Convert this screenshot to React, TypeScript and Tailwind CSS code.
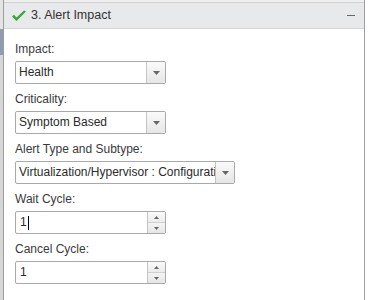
import { ReactNode } from "react";

const font = { fontFamily: '"Liberation Sans", Arial, sans-serif' };

const Label = ({ children }: { children: ReactNode }) => (
  <div className="h-[16px] text-[12px] leading-[16px] text-[#3a3a3a] mb-[4px]">{children}</div>
);

const Select = ({ value, width }: { value: string; width: string }) => (
  <div className={`flex h-[23px] ${width} border border-[#a9a9a9] rounded-[2px] bg-white overflow-hidden`}>
    <div className="flex-1 px-[3px] text-[12px] leading-[21px] text-[#2a2a2a] whitespace-nowrap overflow-hidden">{value}</div>
    <div className="w-[19px] border-l border-[#c4c4c4] bg-gradient-to-b from-[#fafafa] to-[#e6e6e6] flex items-center justify-center">
      <svg width="7" height="4" viewBox="0 0 7 4"><path d="M0 0h7L3.5 4z" fill="#666" /></svg>
    </div>
  </div>
);

const Spinner = ({ value, caret }: { value: string; caret?: boolean }) => (
  <div className="flex h-[23px] w-[151px] border border-[#a9a9a9] rounded-[2px] bg-white overflow-hidden">
    <div className="flex-1 px-[4px] text-[12px] leading-[21px] text-[#2a2a2a] flex items-center">
      {value}
      {caret && <span className="inline-block w-px h-[14px] bg-black ml-px" />}
    </div>
    <div className="w-[18px] border-l border-[#c4c4c4] flex flex-col">
      <div className="flex-1 flex items-center justify-center bg-gradient-to-b from-[#fafafa] to-[#ececec] border-b border-[#d0d0d0]">
        <svg width="5" height="3" viewBox="0 0 5 3"><path d="M0 3h5L2.5 0z" fill="#666" /></svg>
      </div>
      <div className="flex-1 flex items-center justify-center bg-gradient-to-b from-[#f4f4f4] to-[#e6e6e6]">
        <svg width="5" height="3" viewBox="0 0 5 3"><path d="M0 0h5L2.5 3z" fill="#666" /></svg>
      </div>
    </div>
  </div>
);

export default function App() {
  return (
    <div className="w-[371px] h-[300px] bg-white flex overflow-hidden" style={font}>
      {/* page behind the dialog */}
      <div className="w-[3px] flex flex-col bg-[#d8d8d8]">
        <div className="h-[29px] bg-[#e4e4e4]" />
        <div className="h-[26px] bg-[#8d9cb0]" />
        <div className="flex-1 bg-[#d6d6d6]" />
      </div>
      <div className="w-[362px] h-full border-l border-r border-[#9e9e9e] flex flex-col">
        <div className="h-[3px] bg-[#efefef] border-b border-[#d2d2d2]" />
        <div className="h-[26px] bg-[#e8e9ea] border-b border-[#d4d4d4] flex items-center pl-[7px] pr-[9px]">
          <svg width="16" height="12" viewBox="0 0 16 12" className="mr-[4px]">
            <path d="M1 6.5 L5.5 11 L15 1.5 L13 0.5 L5.5 7.5 L3 4.8 Z" fill="#3aa83a" />
          </svg>
          <span className="text-[12.5px] text-[#333] flex-1">3. Alert Impact</span>
          <span className="w-[8px] h-px bg-[#666]" />
        </div>
        <div className="flex flex-col pl-[11px] pt-[12px]">
          <Label>Impact:</Label>
          <Select value="Health" width="w-[151px]" />
          <div className="h-[7px]" />
          <Label>Criticality:</Label>
          <Select value="Symptom Based" width="w-[151px]" />
          <div className="h-[7px]" />
          <Label>Alert Type and Subtype:</Label>
          <Select value="Virtualization/Hypervisor : Configuration" width="w-[220px]" />
          <div className="h-[7px]" />
          <Label>Wait Cycle:</Label>
          <Spinner value="1" caret />
          <div className="h-[7px]" />
          <Label>Cancel Cycle:</Label>
          <Spinner value="1" />
        </div>
      </div>
    </div>
  );
}
